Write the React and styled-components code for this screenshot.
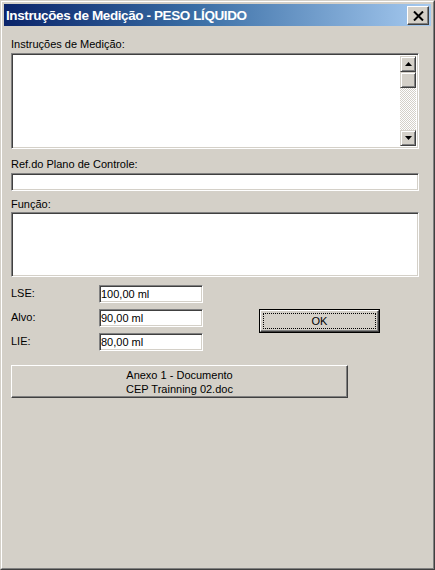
import React from "react";
import styled, { createGlobalStyle } from "styled-components";

const Global = createGlobalStyle`
  html, body { margin: 0; padding: 0; background: #d4d0c8; }
  body { font-family: "Liberation Sans", Arial, sans-serif; font-size: 11px; color: #000; }
  * { box-sizing: border-box; }
`;

const Window = styled.div`
  width: 435px;
  height: 570px;
  background: #d4d0c8;
  border: 1px solid;
  border-color: #d4d0c8 #404040 #404040 #d4d0c8;
  display: flex;
  flex-direction: column;
`;

const Frame = styled.div`
  flex: 1;
  border: 1px solid;
  border-color: #fff #808080 #808080 #fff;
  padding: 2px;
  display: flex;
  flex-direction: column;
`;

const TitleBar = styled.div`
  height: 22px;
  background: linear-gradient(to right, #0a246a 0%, #3a6ea5 45%, #a6caf0 100%);
  display: flex;
  align-items: center;
  justify-content: space-between;
  padding: 0 2px 0 2px;
`;

const TitleText = styled.span`
  color: #fff;
  font-family: "Liberation Sans", Arial, sans-serif;
  font-weight: bold;
  font-size: 13.5px;
  letter-spacing: -0.4px;
  white-space: nowrap;
`;

const CloseButton = styled.div`
  width: 22px;
  height: 19px;
  margin-top: 1px;
  background: #d4d0c8;
  border: 1px solid;
  border-color: #fff #404040 #404040 #fff;
  box-shadow: inset -1px -1px #808080;
  display: flex;
  align-items: center;
  justify-content: center;
`;

const Content = styled.div`
  display: flex;
  flex-direction: column;
  padding: 12px 11px 0 7px;
`;

const Label = styled.div`
  height: 13px;
  line-height: 13px;
  font-size: 11px;
  margin-top: ${(p) => p.$mt || 0}px;
  margin-bottom: ${(p) => (p.$mb == null ? 2 : p.$mb)}px;
  white-space: nowrap;
`;

const Sunken = styled.div`
  background: #fff;
  border: 1px solid;
  border-color: #808080 #fff #fff #808080;
  box-shadow: inset 1px 1px #404040, inset -1px -1px #d4d0c8;
  padding: 2px;
`;

const TextArea = styled(Sunken)`
  width: 408px;
  height: ${(p) => p.$h}px;
  display: flex;
`;

const Input = styled(Sunken)`
  width: ${(p) => p.$w}px;
  height: 18px;
  line-height: 13px;
  padding: 2px 2px 0 1px;
  font-size: 11px;
  white-space: nowrap;
`;

const Scroll = styled.div`
  margin-left: auto;
  width: 16px;
  display: flex;
  flex-direction: column;
  background: repeating-conic-gradient(#fff 0 25%, #d4d0c8 0 50%) 0 0 / 2px 2px;
`;

const ScrollBtn = styled.div`
  width: 16px;
  height: 16px;
  background: #d4d0c8;
  border: 1px solid;
  border-color: #d4d0c8 #404040 #404040 #d4d0c8;
  box-shadow: inset 1px 1px #fff, inset -1px -1px #808080;
  display: flex;
  align-items: center;
  justify-content: center;
  margin-top: ${(p) => (p.$bottom ? "auto" : "0")};
`;

const Grid = styled.div`
  display: grid;
  grid-template-columns: 88px 104px 56px 121px;
  grid-template-rows: 18px 18px 18px;
  row-gap: 6px;
  margin-top: 8px;
  align-items: center;
`;

const RowLabel = styled.div`
  grid-column: 1;
  font-size: 11px;
  line-height: 13px;
  margin-top: -2px;
`;

const RaisedButton = styled.div`
  background: #d4d0c8;
  border: 1px solid;
  border-color: #fff #404040 #404040 #fff;
  box-shadow: inset -1px -1px #808080;
  display: flex;
  flex-direction: column;
  align-items: center;
  justify-content: center;
  font-size: 11px;
  line-height: 14px;
  text-align: center;
`;

const DefaultButton = styled.div`
  grid-column: 4;
  grid-row: 2 / span 2;
  align-self: start;
  height: 24px;
  border: 1px solid #000;
  display: flex;
`;

const OkInner = styled(RaisedButton)`
  flex: 1;
  padding: 2px;
`;

const Focus = styled.div`
  width: 100%;
  height: 100%;
  border: 1px dotted #000;
  display: flex;
  align-items: center;
  justify-content: center;
  font-size: 11px;
`;

const AttachButton = styled(RaisedButton)`
  width: 337px;
  height: 33px;
  margin-top: 14px;
  padding-top: 1px;
`;

const UpArrow = () => (
  <svg width="7" height="4" viewBox="0 0 7 4"><path d="M3.5 0 L7 4 L0 4 Z" fill="#000" /></svg>
);
const DownArrow = () => (
  <svg width="7" height="4" viewBox="0 0 7 4"><path d="M0 0 L7 0 L3.5 4 Z" fill="#000" /></svg>
);

export default function App() {
  return (
    <>
      <Global />
      <Window>
        <Frame>
          <TitleBar>
            <TitleText>Instruções de Medição - PESO LÍQUIDO</TitleText>
            <CloseButton>
              <svg width="11" height="10" viewBox="0 0 11 10">
                <path d="M1 0.5 L10 9.5 M10 0.5 L1 9.5" stroke="#000" strokeWidth="2" />
              </svg>
            </CloseButton>
          </TitleBar>
          <Content>
            <Label>Instruções de Medição:</Label>
            <TextArea $h={96}>
              <Scroll>
                <ScrollBtn><UpArrow /></ScrollBtn>
                <ScrollBtn />
                <ScrollBtn $bottom><DownArrow /></ScrollBtn>
              </Scroll>
            </TextArea>
            <Label $mt={9}>Ref.do Plano de Controle:</Label>
            <Input $w={408} />
            <Label $mt={7} $mb={1}>Função:</Label>
            <TextArea $h={65} />
            <Grid>
              <RowLabel>LSE:</RowLabel>
              <Input $w={104}>100,00 ml</Input>
              <RowLabel>Alvo:</RowLabel>
              <Input $w={104}>90,00 ml</Input>
              <DefaultButton>
                <OkInner>
                  <Focus>OK</Focus>
                </OkInner>
              </DefaultButton>
              <RowLabel>LIE:</RowLabel>
              <Input $w={104}>80,00 ml</Input>
            </Grid>
            <AttachButton>
              <span>Anexo 1 - Documento</span>
              <span>CEP Trainning 02.doc</span>
            </AttachButton>
          </Content>
        </Frame>
      </Window>
    </>
  );
}
